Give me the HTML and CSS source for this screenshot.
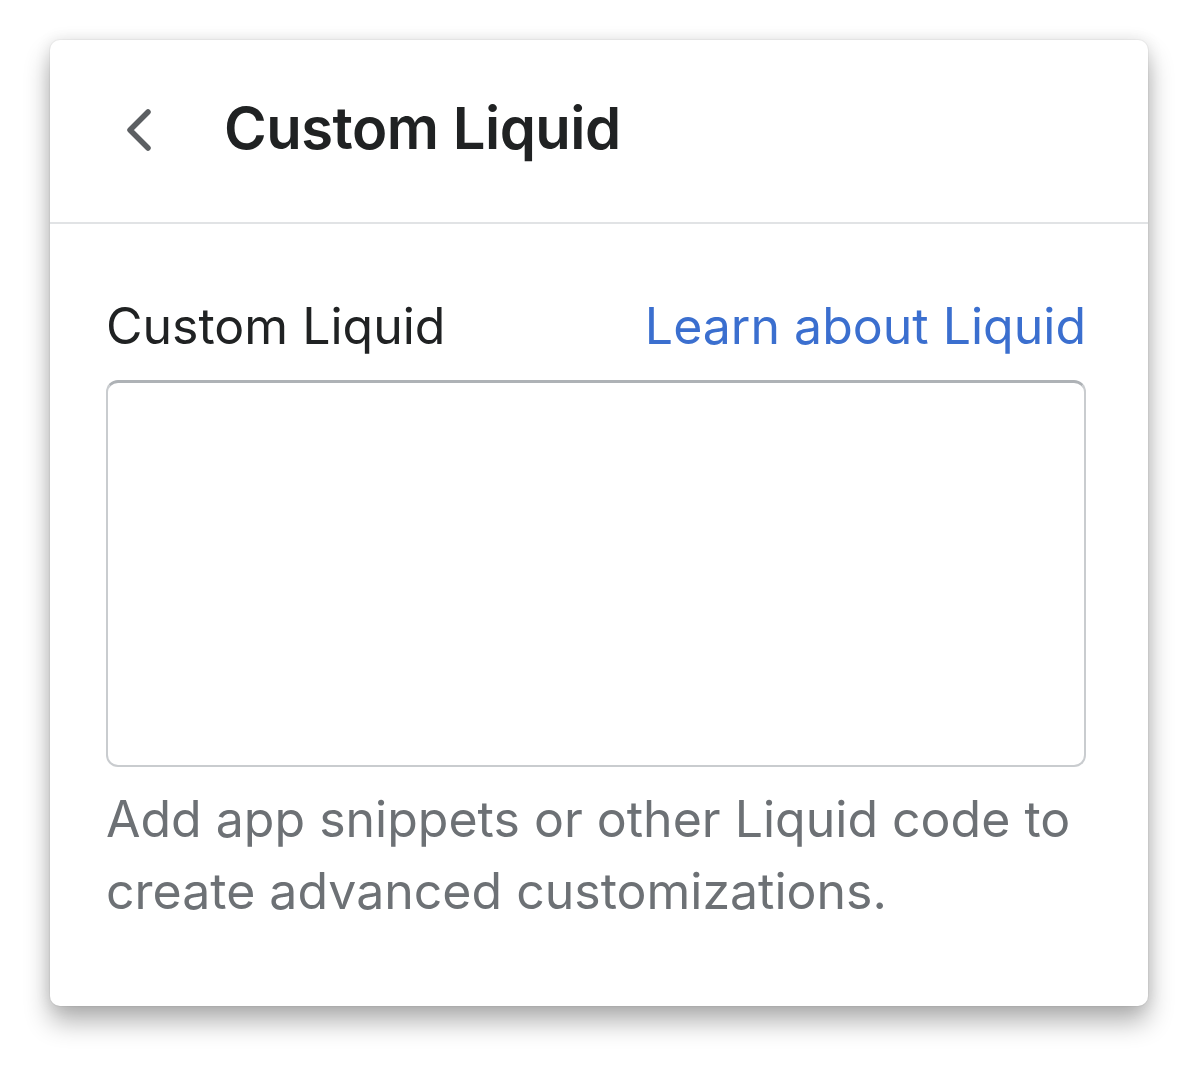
FILE: index.html
```html
<!DOCTYPE html>
<html lang="en">
<head>
  <meta charset="UTF-8">
  <title>Custom Liquid</title>
  <link rel="stylesheet" href="styles.css">
</head>
<body>

<div class="page">
  <div class="panel">
    <div class="panel-header">
      <button class="back-btn" aria-label="Back">
        <svg width="34" height="44" viewBox="0 0 34 44">
          <path d="M26 4 L8 22 L26 40" fill="none" stroke="#5c5f62" stroke-width="5.5" stroke-linecap="round" stroke-linejoin="round"/>
        </svg>
      </button>
      <h2>Custom Liquid</h2>
    </div>

    <div class="panel-body">
      <div class="field-head">
        <label for="liquidCode">Custom Liquid</label>
        <a href="#" class="help-link">Learn about Liquid</a>
      </div>
      <textarea id="liquidCode"></textarea>
      <p class="help-text">Add app snippets or other Liquid code to create advanced customizations.</p>
    </div>
  </div>
</div>

</body>
</html>
```

FILE: styles.css
```css
body {
  font-family: Inter, "Noto Sans", sans-serif;
  background-color: #fff;
  margin: 0;
  padding: 0;
}
.page {
  padding: 40px 52px 60px 50px;
}
.panel {
  height: 966px;
  background-color: #fff;
  border-radius: 10px;
  box-shadow: 0 0 0 1px rgba(0, 0, 0, 0.03), 0 0 16px rgba(0, 0, 0, 0.1), 0 16px 26px rgba(0, 0, 0, 0.3);
  overflow: hidden;
}
.panel-header {
  height: 182px;
  display: flex;
  align-items: center;
  padding-left: 72px;
  border-bottom: 2px solid #e1e3e5;
}
.back-btn {
  background: none;
  border: none;
  padding: 0;
  width: 34px;
  height: 44px;
  margin-right: 68px;
  margin-top: -2px;
  cursor: pointer;
}
.panel-header h2 {
  margin: 0;
  margin-top: -6px;
  font-size: 58px;
  font-weight: 600;
  color: #202223;
  letter-spacing: -0.5px;
}
.panel-body {
  padding: 0 62px 0 56px;
}
.field-head {
  display: flex;
  justify-content: space-between;
  align-items: baseline;
  margin-top: 70px;
  height: 86px;
}
label {
  font-size: 50px;
  color: #202223;
  line-height: 64px;
}
.help-link {
  font-size: 50px;
  color: #3b6fcf;
  text-decoration: none;
  line-height: 64px;
}
textarea {
  display: block;
  width: 100%;
  height: 387px;
  box-sizing: border-box;
  border: 2px solid #c9cccf;
  border-top: 3px solid #aeb2b6;
  border-radius: 12px;
  resize: none;
  margin: 0;
}
.help-text {
  margin: 16px 0 0;
  font-size: 50px;
  line-height: 72px;
  color: #6d7175;
}
```
